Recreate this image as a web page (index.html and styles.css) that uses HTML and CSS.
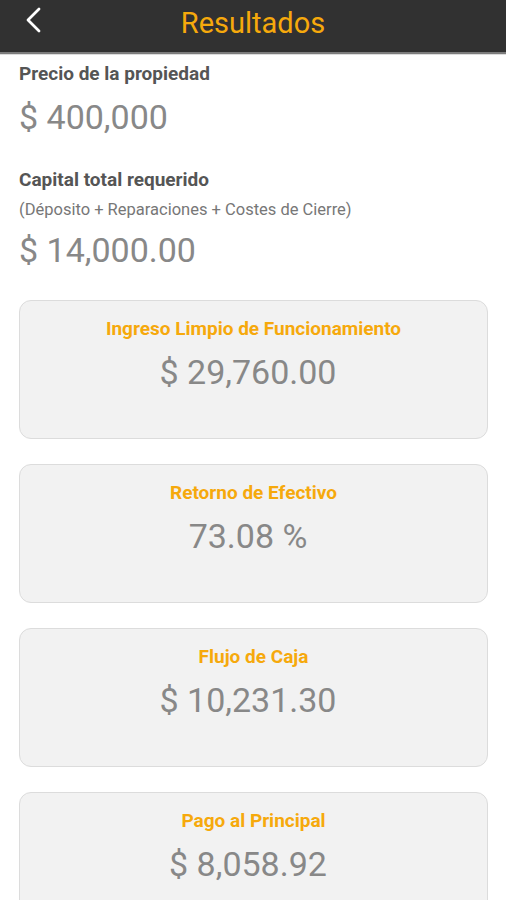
FILE: index.html
```html
<!DOCTYPE html>
<html>
   <head>
      <meta http-equiv="Content-Type" content="text/html;charset=utf-8" />
      <link rel="stylesheet" href="styles.css">
   </head>
   <body>
      <header class="barra">
         <span class="voltar">
            <svg width="18" height="26" viewBox="0 0 18 26"><path d="M14 2 L3 13 L14 24" fill="none" stroke="#fff" stroke-width="2.8" stroke-linecap="round" stroke-linejoin="round"/></svg>
         </span>
         <h1 class="titulo">Resultados</h1>
      </header>
      <main class="conteudo">
         <section class="item">
            <h2 class="rotulo">Precio de la propiedad</h2>
            <p class="valor">$ 400,000</p>
         </section>
         <section class="item">
            <h2 class="rotulo">Capital total requerido</h2>
            <p class="nota">(Déposito + Reparaciones + Costes de Cierre)</p>
            <p class="valor">$ 14,000.00</p>
         </section>
         <div class="cartoes">
            <div class="cartao">
               <h3 class="cartao-titulo">Ingreso Limpio de Funcionamiento</h3>
               <p class="cartao-valor">$ 29,760.00</p>
            </div>
            <div class="cartao">
               <h3 class="cartao-titulo">Retorno de Efectivo</h3>
               <p class="cartao-valor">73.08 %</p>
            </div>
            <div class="cartao">
               <h3 class="cartao-titulo">Flujo de Caja</h3>
               <p class="cartao-valor">$ 10,231.30</p>
            </div>
            <div class="cartao">
               <h3 class="cartao-titulo">Pago al Principal</h3>
               <p class="cartao-valor">$ 8,058.92</p>
            </div>
         </div>
      </main>
   </body>
</html>
```
FILE: styles.css
```css
body {margin: 0; font-family: Roboto, "Noto Sans", sans-serif; background: #fff; overflow: hidden;}
h1, h2, h3, p {margin: 0; font-weight: normal;}

.barra {
   height: 52px;
   background: #313131;
   border-bottom: 2px solid #7c7c7c;
   box-shadow: 0 1px 0 #dcdcdc;
   display: flex;
   align-items: center;
   justify-content: center;
   position: relative;
}
.voltar {position: absolute; left: 25px; top: 7px;}
.titulo {color: #f6a90c; font-size: 29px; margin-top: -6px;}

.conteudo {padding: 9px 18px 0 19px; display: flex; flex-direction: column;}
.item {display: flex; flex-direction: column;}
.item + .item {margin-top: 32px;}
.rotulo {font-size: 19px; font-weight: 700; color: #555; line-height: 22px;}
.nota {font-size: 16.5px; color: #777; line-height: 20px; margin-top: 9px;}
.valor {font-size: 34px; color: #888; line-height: 40px; margin-top: 12px;}
.nota + .valor {margin-top: 10px;}

.cartoes {display: flex; flex-direction: column; gap: 25px; margin-top: 30px;}
.cartao {
   height: 139px;
   box-sizing: border-box;
   background: #f2f2f2;
   border: 1px solid #dcdcdc;
   border-radius: 12px;
   display: flex;
   flex-direction: column;
   align-items: center;
   padding-top: 17px;
   flex-shrink: 0;
}
.cartao-titulo {font-size: 19px; font-weight: 700; color: #f6a90c; line-height: 22px;}
.cartao-valor {font-size: 34px; color: #888; line-height: 40px; margin-top: 12px; padding-right: 11px;}
```
